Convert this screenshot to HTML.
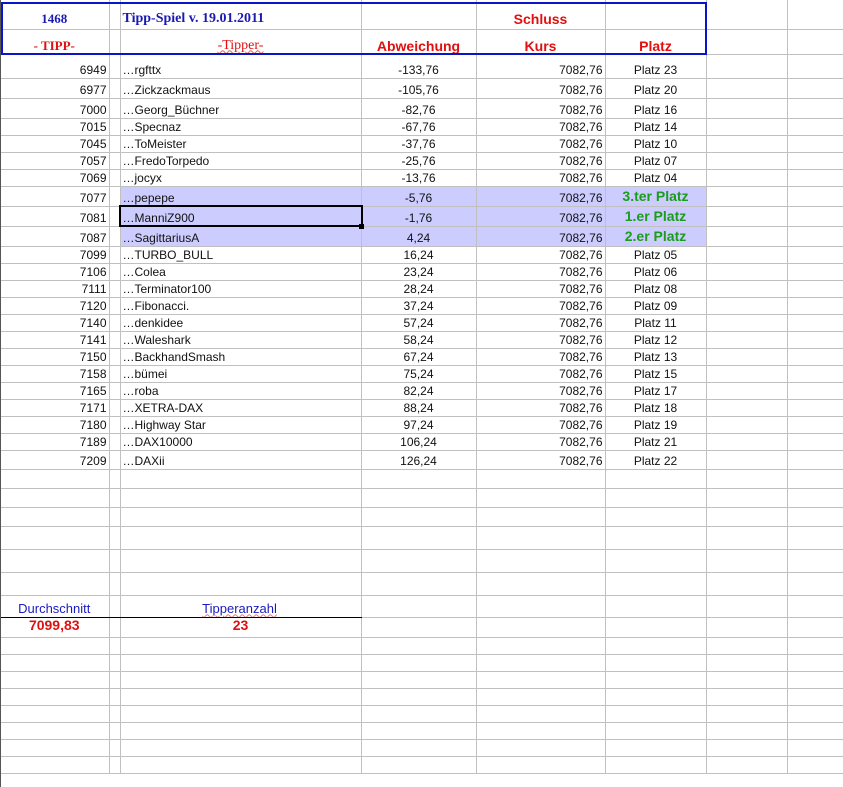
<!DOCTYPE html>
<html><head><meta charset="utf-8"><style>
body{margin:0;width:843px;height:787px;overflow:hidden;background:#fff;position:relative;font-family:"Liberation Sans",Arial,sans-serif;}
table{position:absolute;left:0;top:0;border-collapse:collapse;table-layout:fixed;width:844px;}
td{border-right:1px solid #c0c0c0;border-bottom:1px solid #c0c0c0;padding:0 2px 1px 2px;font-size:12px;color:#111;vertical-align:bottom;white-space:nowrap;overflow:hidden;line-height:14px;}
td.r{text-align:right}td.c{text-align:center}
tr.h td{background:#ccccff}
tr.h td.a,tr.h td.b,tr.h td.g,tr.h td.hh{background:#fff}
.grn{color:#1c9c1c;font-weight:bold;font-size:14px;vertical-align:middle}
.hd{color:#e01010;font-weight:bold;font-size:14px}
.tm{font-family:"Liberation Serif","Times New Roman",serif;font-weight:bold;font-size:13px}
tr.top td{padding-bottom:3px;vertical-align:bottom}
</style></head><body>
<table>
<colgroup><col style="width:109px"><col style="width:11px"><col style="width:241px"><col style="width:115px"><col style="width:129px"><col style="width:101px"><col style="width:81px"><col style="width:57px"></colgroup>
<tr class="top" style="height:29px"><td class="c tm" style="color:#1a1ab0">1468</td><td></td><td class="tm" style="color:#1a1ab0;font-size:14px">Tipp-Spiel v. 19.01.2011</td><td></td><td class="c hd">Schluss</td><td></td><td></td><td></td></tr>
<tr style="height:25px"><td class="c tm" style="color:#e01010">- TIPP-</td><td></td><td class="c" style="font-family:'Liberation Serif',serif;color:#e01010;font-size:14px"><span style="text-decoration:underline wavy #e06060 1px">-Tipper-</span></td><td class="c hd">Abweichung</td><td class="c hd">Kurs</td><td class="c hd">Platz</td><td></td><td></td></tr>
<tr style="height:24px"><td class="r">6949</td><td></td><td>…rgfttx</td><td class="c">-133,76</td><td class="r">7082,76</td><td class="c">Platz 23</td><td></td><td></td></tr>
<tr style="height:20px"><td class="r">6977</td><td></td><td>…Zickzackmaus</td><td class="c">-105,76</td><td class="r">7082,76</td><td class="c">Platz 20</td><td></td><td></td></tr>
<tr style="height:20px"><td class="r">7000</td><td></td><td>…Georg_Büchner</td><td class="c">-82,76</td><td class="r">7082,76</td><td class="c">Platz 16</td><td></td><td></td></tr>
<tr style="height:17px"><td class="r">7015</td><td></td><td>…Specnaz</td><td class="c">-67,76</td><td class="r">7082,76</td><td class="c">Platz 14</td><td></td><td></td></tr>
<tr style="height:17px"><td class="r">7045</td><td></td><td>…ToMeister</td><td class="c">-37,76</td><td class="r">7082,76</td><td class="c">Platz 10</td><td></td><td></td></tr>
<tr style="height:17px"><td class="r">7057</td><td></td><td>…FredoTorpedo</td><td class="c">-25,76</td><td class="r">7082,76</td><td class="c">Platz 07</td><td></td><td></td></tr>
<tr style="height:17px"><td class="r">7069</td><td></td><td>…jocyx</td><td class="c">-13,76</td><td class="r">7082,76</td><td class="c">Platz 04</td><td></td><td></td></tr>
<tr class="h" style="height:20px"><td class="r a">7077</td><td class="b"></td><td>…pepepe</td><td class="c">-5,76</td><td class="r">7082,76</td><td class="c grn">3.ter Platz</td><td class="g"></td><td class="hh"></td></tr>
<tr class="h" style="height:20px"><td class="r a">7081</td><td class="b"></td><td>…ManniZ900</td><td class="c">-1,76</td><td class="r">7082,76</td><td class="c grn">1.er Platz</td><td class="g"></td><td class="hh"></td></tr>
<tr class="h" style="height:20px"><td class="r a">7087</td><td class="b"></td><td>…SagittariusA</td><td class="c">4,24</td><td class="r">7082,76</td><td class="c grn">2.er Platz</td><td class="g"></td><td class="hh"></td></tr>
<tr style="height:17px"><td class="r">7099</td><td></td><td>…TURBO_BULL</td><td class="c">16,24</td><td class="r">7082,76</td><td class="c">Platz 05</td><td></td><td></td></tr>
<tr style="height:17px"><td class="r">7106</td><td></td><td>…Colea</td><td class="c">23,24</td><td class="r">7082,76</td><td class="c">Platz 06</td><td></td><td></td></tr>
<tr style="height:17px"><td class="r">7111</td><td></td><td>…Terminator100</td><td class="c">28,24</td><td class="r">7082,76</td><td class="c">Platz 08</td><td></td><td></td></tr>
<tr style="height:17px"><td class="r">7120</td><td></td><td>…Fibonacci.</td><td class="c">37,24</td><td class="r">7082,76</td><td class="c">Platz 09</td><td></td><td></td></tr>
<tr style="height:17px"><td class="r">7140</td><td></td><td>…denkidee</td><td class="c">57,24</td><td class="r">7082,76</td><td class="c">Platz 11</td><td></td><td></td></tr>
<tr style="height:17px"><td class="r">7141</td><td></td><td>…Waleshark</td><td class="c">58,24</td><td class="r">7082,76</td><td class="c">Platz 12</td><td></td><td></td></tr>
<tr style="height:17px"><td class="r">7150</td><td></td><td>…BackhandSmash</td><td class="c">67,24</td><td class="r">7082,76</td><td class="c">Platz 13</td><td></td><td></td></tr>
<tr style="height:17px"><td class="r">7158</td><td></td><td>…bümei</td><td class="c">75,24</td><td class="r">7082,76</td><td class="c">Platz 15</td><td></td><td></td></tr>
<tr style="height:17px"><td class="r">7165</td><td></td><td>…roba</td><td class="c">82,24</td><td class="r">7082,76</td><td class="c">Platz 17</td><td></td><td></td></tr>
<tr style="height:17px"><td class="r">7171</td><td></td><td>…XETRA-DAX</td><td class="c">88,24</td><td class="r">7082,76</td><td class="c">Platz 18</td><td></td><td></td></tr>
<tr style="height:17px"><td class="r">7180</td><td></td><td>…Highway Star</td><td class="c">97,24</td><td class="r">7082,76</td><td class="c">Platz 19</td><td></td><td></td></tr>
<tr style="height:17px"><td class="r">7189</td><td></td><td>…DAX10000</td><td class="c">106,24</td><td class="r">7082,76</td><td class="c">Platz 21</td><td></td><td></td></tr>
<tr style="height:19px"><td class="r">7209</td><td></td><td>…DAXii</td><td class="c">126,24</td><td class="r">7082,76</td><td class="c">Platz 22</td><td></td><td></td></tr>
<tr style="height:19px"><td></td><td></td><td></td><td></td><td></td><td></td><td></td><td></td></tr>
<tr style="height:19px"><td></td><td></td><td></td><td></td><td></td><td></td><td></td><td></td></tr>
<tr style="height:19px"><td></td><td></td><td></td><td></td><td></td><td></td><td></td><td></td></tr>
<tr style="height:23px"><td></td><td></td><td></td><td></td><td></td><td></td><td></td><td></td></tr>
<tr style="height:23px"><td></td><td></td><td></td><td></td><td></td><td></td><td></td><td></td></tr>
<tr style="height:23px"><td></td><td></td><td></td><td></td><td></td><td></td><td></td><td></td></tr>
<tr style="height:22px"><td class="c" style="color:#1a1ac0;font-size:13px;border-bottom:1px solid #000">Durchschnitt</td><td style="border-bottom:1px solid #000"></td><td class="c" style="color:#1a1ac0;font-size:13px;border-bottom:1px solid #000;padding-right:4px"><span style="text-decoration:underline wavy #e08080 1px">Tipperanzahl</span></td><td></td><td></td><td></td><td></td><td></td></tr>
<tr style="height:20px"><td class="c hd" style="vertical-align:top">7099,83</td><td></td><td class="c hd" style="vertical-align:top">23</td><td></td><td></td><td></td><td></td><td></td></tr>
<tr style="height:17px"><td></td><td></td><td></td><td></td><td></td><td></td><td></td><td></td></tr>
<tr style="height:17px"><td></td><td></td><td></td><td></td><td></td><td></td><td></td><td></td></tr>
<tr style="height:17px"><td></td><td></td><td></td><td></td><td></td><td></td><td></td><td></td></tr>
<tr style="height:17px"><td></td><td></td><td></td><td></td><td></td><td></td><td></td><td></td></tr>
<tr style="height:17px"><td></td><td></td><td></td><td></td><td></td><td></td><td></td><td></td></tr>
<tr style="height:17px"><td></td><td></td><td></td><td></td><td></td><td></td><td></td><td></td></tr>
<tr style="height:17px"><td></td><td></td><td></td><td></td><td></td><td></td><td></td><td></td></tr>
<tr style="height:17px"><td></td><td></td><td></td><td></td><td></td><td></td><td></td><td></td></tr>
</table>
<div style="position:absolute;left:0;top:0;width:1px;height:787px;background:#555"></div>
<div style="position:absolute;left:1px;top:2px;width:702px;height:49px;border:2px solid #0a14c8"></div>
<div style="position:absolute;left:119px;top:205px;width:240px;height:18px;border:2px solid #000"></div>
<div style="position:absolute;left:359px;top:224px;width:5px;height:5px;background:#000"></div>
</body></html>
